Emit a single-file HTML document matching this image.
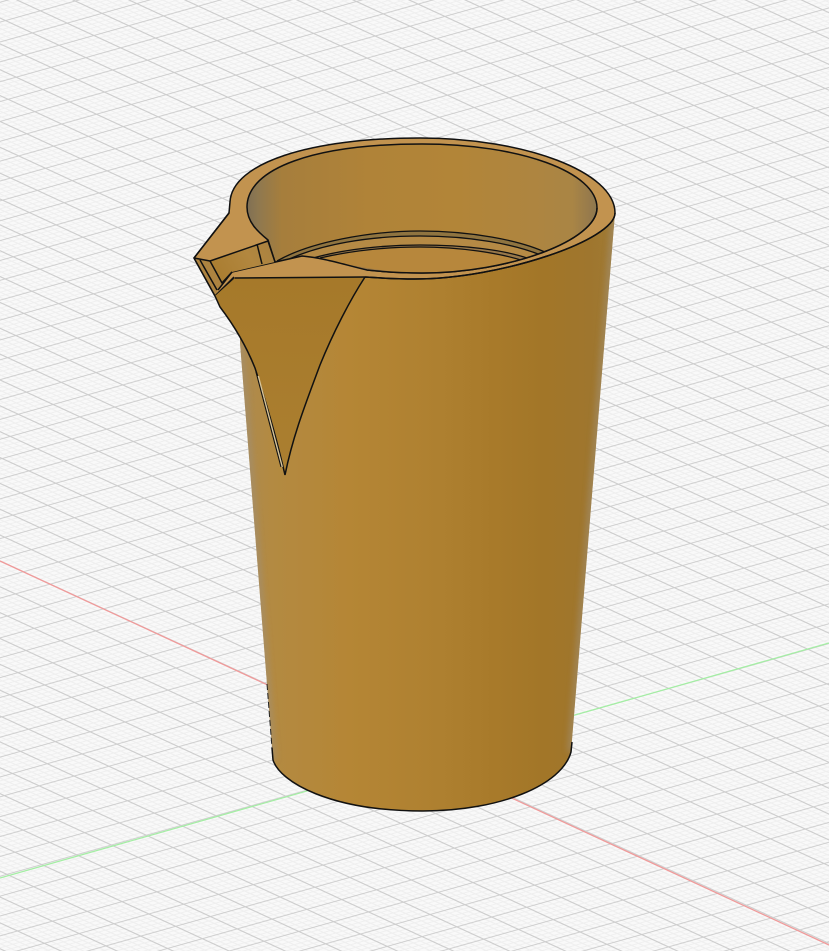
<!DOCTYPE html>
<html>
<head>
<meta charset="utf-8">
<style>
html,body{margin:0;padding:0;background:#f8f8f8;width:829px;height:951px;overflow:hidden}
svg{display:block}
</style>
</head>
<body>
<svg width="829" height="951" viewBox="0 0 829 951" xmlns="http://www.w3.org/2000/svg">
<defs>
<pattern id="grid" patternUnits="userSpaceOnUse" width="100" height="100" patternTransform="matrix(.2677 .1235 .3484 -.0978 425 757)">
  <g stroke="#efefef" stroke-width="5" fill="none">
    <path d="M20 0V100M40 0V100M60 0V100M80 0V100M0 20H100M0 40H100M0 60H100M0 80H100"/>
  </g>
  <g stroke="#cdcdcd" stroke-width="5" fill="none">
    <path d="M0 0V100M100 0V100M0 0H100M0 100H100"/>
  </g>
</pattern>
<linearGradient id="body" gradientUnits="userSpaceOnUse" x1="250" y1="0" x2="615" y2="0">
  <stop offset="0" stop-color="#ae8a4c"/>
  <stop offset=".055" stop-color="#b38a42"/>
  <stop offset=".27" stop-color="#b58635"/>
  <stop offset=".52" stop-color="#ae8030"/>
  <stop offset=".67" stop-color="#a87a2a"/>
  <stop offset=".81" stop-color="#a27628"/>
  <stop offset=".93" stop-color="#9f762e"/>
  <stop offset="1" stop-color="#a07a34"/>
</linearGradient>
<linearGradient id="inner" gradientUnits="userSpaceOnUse" x1="247" y1="0" x2="597" y2="0">
  <stop offset="0" stop-color="#7f6f54"/>
  <stop offset=".03" stop-color="#8e7850"/>
  <stop offset=".1" stop-color="#a67e3c"/>
  <stop offset=".35" stop-color="#b08338"/>
  <stop offset=".6" stop-color="#b28538"/>
  <stop offset=".82" stop-color="#ae8540"/>
  <stop offset=".93" stop-color="#a98545"/>
  <stop offset=".98" stop-color="#967a4c"/>
  <stop offset="1" stop-color="#8c784e"/>
</linearGradient>
<linearGradient id="tri" gradientUnits="userSpaceOnUse" x1="300" y1="280" x2="290" y2="470">
  <stop offset="0" stop-color="#a6792a"/>
  <stop offset="1" stop-color="#ab7f30"/>
</linearGradient>
<linearGradient id="chan" gradientUnits="userSpaceOnUse" x1="215" y1="280" x2="275" y2="245">
  <stop offset="0" stop-color="#a97c2f"/>
  <stop offset=".6" stop-color="#b2873f"/>
  <stop offset="1" stop-color="#a98140"/>
</linearGradient>
<filter id="b3" x="-50%" y="-10%" width="200%" height="120%"><feGaussianBlur stdDeviation="3.5"/></filter>
<clipPath id="bodyclip"><path d="M240 343L273 760C280 782 330 811 423 811C500 811 562 785 571 752L615 213L500 200L240 300Z"/></clipPath>
<clipPath id="innerclip"><path d="M247 207C247 168 315 144 422 144C520 144 597 172 597 208C597 240 510 273 422 273C400 273 385 272 367 270L300 262L280 262L275 262L268 240C258 232 247 222 247 207Z"/></clipPath>
</defs>

<rect width="829" height="951" fill="#f9f9f9"/>
<rect width="829" height="951" fill="url(#grid)"/>
<path d="M0 561L829 945" stroke="#f09a9a" stroke-width="1.3" fill="none"/>
<path d="M0 878L829 643" stroke="#a4eea4" stroke-width="1.3" fill="none"/>

<!-- body -->
<path d="M240 343L273 760C280 782 330 811 423 811C500 811 562 785 571 752L615 213L500 200L240 300Z" fill="url(#body)"/>
<g clip-path="url(#bodyclip)">
  <path d="M240 343L273 760" stroke="#a0917a" stroke-width="5" fill="none" filter="url(#b3)" opacity=".8"/>
  <path d="M615 213L571 752" stroke="#a08d6c" stroke-width="6" fill="none" filter="url(#b3)" opacity=".85"/>
</g>
<path d="M267 684L272 748" stroke="#222" stroke-width="1" stroke-dasharray="6 3" fill="none"/>
<path d="M272 748L273 760C280 782 330 811 423 811C500 811 562 785 571 752L572 742" stroke="#111" stroke-width="1.5" fill="none"/>

<!-- rim + spout top -->
<path d="M230 202C232 163 310 138 420 138C525 138 615 172 615 213C615 240 500 279 415 279C395 279 380 278 365 277L235 278L215 296L194 258L229 213Z" fill="#c2934f" stroke="#111" stroke-width="1.5" stroke-linejoin="round"/>

<!-- inner wall -->
<path d="M247 207C247 168 315 144 422 144C520 144 597 172 597 208C597 240 510 273 422 273C400 273 385 272 367 270L300 262L280 262L275 262L268 240C258 232 247 222 247 207Z" fill="url(#inner)" stroke="#111" stroke-width="1.5"/>

<!-- ledges inside -->
<g clip-path="url(#innerclip)">
<path d="M277 261C310 242 370 231 420 231C470 231 520 240 547 253C525 262 480 272 420 273C390 273 340 268 300 262Z" fill="#8f7440"/>
<path d="M285 261C320 244 370 236 420 236C470 236 515 244 543 256C520 264 470 272 420 273C390 273 340 268 300 262Z" fill="#b58a45"/>
<path d="M313 258C345 249 385 245 420 245C465 245 505 250 530 259C510 266 470 272 420 273C390 273 345 268 313 258Z" fill="#98784a"/>
<path d="M320 258C350 251 385 247 420 247C460 247 500 253 524 261C505 267 470 272 420 273C390 273 350 266 320 258Z" fill="#b7873c"/>
<g fill="none" stroke="#111" stroke-width="1.3">
  <path d="M277 261C310 242 370 231 420 231C470 231 520 240 547 253"/>
  <path d="M285 261C320 244 370 236 420 236C470 236 515 244 543 256"/>
  <path d="M313 258C345 249 385 245 420 245C465 245 505 250 530 259"/>
  <path d="M320 258C350 251 385 247 420 247C460 247 500 253 524 261"/>
</g>
</g>

<!-- flange -->
<path d="M232 272L280 261L302 256C325 258 345 265 367 270L365 277L235 278Z" fill="#c2934f"/>
<path d="M597 208C597 240 510 273 422 273C400 273 385 272 367 270C345 265 325 258 302 256L280 261L232 272" fill="none" stroke="#111" stroke-width="1.5"/>
<path d="M615 213C615 240 500 279 415 279C395 279 380 278 365 277" fill="none" stroke="#111" stroke-width="1.5"/>

<!-- spout channel -->
<path d="M210 261L268 241L275 262L232 272L218 289Z" fill="url(#chan)"/>
<path d="M194 258L210 261L222 283L218 291L215 296Z" fill="#ad8340"/>
<g fill="none" stroke="#111" stroke-width="1.5" stroke-linejoin="round">
  <path d="M194 258L210 261L268 241L275 262"/>
  <path d="M200 260L217 290"/>
  <path d="M210 261L222 283L232 272"/>
  <path d="M257 244L262 264"/>
  <path d="M215 296L234 277"/>
  <path d="M218 290L232 272"/>
  <path d="M229 213L194 258L215 296"/>
</g>

<!-- triangular face -->
<path d="M235 278L365 277C350 300 333 333 320 365C307 400 293 435 285 475C277 440 267 405 255 368C247 348 236 328 220 307L215 296Z" fill="url(#tri)"/>
<path d="M235 278L365 277" fill="none" stroke="#111" stroke-width="1.5"/>
<path d="M365 277C350 300 333 333 320 365C307 400 293 435 285 475C277 440 267 405 255 368C247 348 236 328 220 307L215 296" fill="none" stroke="#111" stroke-width="1.5"/>
<path d="M258 376L282 467" fill="none" stroke="#d8c59a" stroke-width="2"/>
<path d="M256 372L281 467" fill="none" stroke="#111" stroke-width="1.1"/>
</svg>
</body>
</html>
